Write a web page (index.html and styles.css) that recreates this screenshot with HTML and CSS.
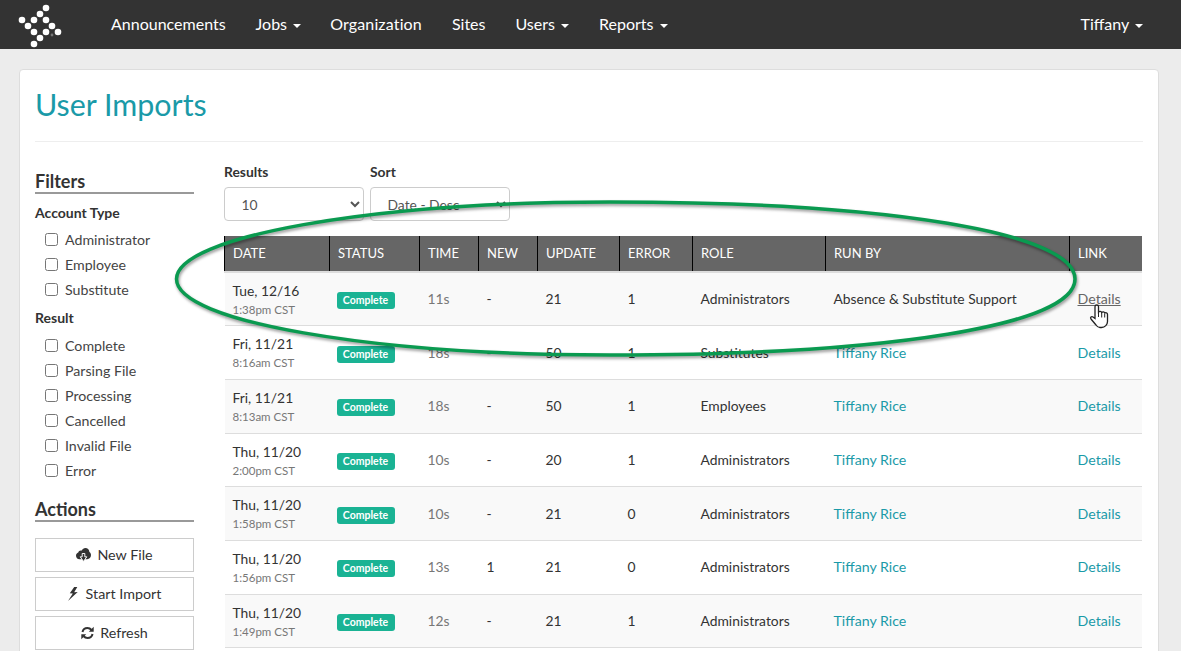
FILE: index.html
```html
<!DOCTYPE html>
<html lang="en">
<head>
<meta charset="utf-8">
<title>User Imports</title>
<link rel="stylesheet" href="styles.css">
</head>
<body>
<nav class="navbar">
  <svg class="logo" width="70" height="49" viewBox="0 0 70 49" aria-hidden="true">
    <g fill="#fff">
      <circle cx="46" cy="8" r="3.3"/><circle cx="40" cy="14" r="3.3"/><circle cx="34" cy="20" r="3.3"/>
      <circle cx="22" cy="20" r="3.3"/><circle cx="28" cy="26" r="3.3"/><circle cx="46" cy="20" r="3.3"/>
      <circle cx="52" cy="26" r="3.3"/><circle cx="34" cy="32" r="3.3"/><circle cx="46" cy="32" r="3.3"/>
      <circle cx="58" cy="32" r="3.3"/><circle cx="40" cy="38" r="3.3"/><circle cx="34" cy="44" r="3.3"/>
    </g>
    <circle cx="52" cy="35" r="1.4" fill="#777"/>
  </svg>
  <ul class="nav-list">
    <li><a href="#">Announcements</a></li>
    <li class="nav-tight"><a href="#">Jobs <span class="caret"></span></a></li>
    <li class="nav-wide"><a href="#">Organization</a></li>
    <li><a href="#">Sites</a></li>
    <li><a href="#">Users <span class="caret"></span></a></li>
    <li><a href="#">Reports <span class="caret"></span></a></li>
  </ul>
  <a class="nav-user" href="#">Tiffany <span class="caret"></span></a>
</nav>

<main class="card">
  <h1 class="title">User Imports</h1>
  <div class="columns">
    <aside class="sidebar">
      <h3 class="side-heading">Filters</h3>
      <h4 class="group-heading">Account Type</h4>
      <label class="check"><input type="checkbox">Administrator</label>
      <label class="check"><input type="checkbox">Employee</label>
      <label class="check"><input type="checkbox">Substitute</label>
      <h4 class="group-heading group-result">Result</h4>
      <label class="check"><input type="checkbox">Complete</label>
      <label class="check"><input type="checkbox">Parsing File</label>
      <label class="check"><input type="checkbox">Processing</label>
      <label class="check"><input type="checkbox">Cancelled</label>
      <label class="check"><input type="checkbox">Invalid File</label>
      <label class="check"><input type="checkbox">Error</label>
      <h3 class="side-heading actions-heading">Actions</h3>
      <div class="actions">
        <button class="btn"><svg width="15" height="14" viewBox="0 0 16 14" preserveAspectRatio="none" aria-hidden="true"><path fill="#333" d="M3.6 11.2C1.6 11.2 0 9.7 0 7.8c0-1.5 1-2.8 2.4-3.2C2.7 3.3 3.8 2.4 5 2.4c.4 0 .8.1 1.1.2C6.900 1 8.400 0 10 0c2.300 0 4.100 1.700 4.300 3.900 1 .6 1.700 1.800 1.700 3.100 0 2.300-1.800 4.200-4 4.200z"/><path fill="#333" stroke="#fff" stroke-width="1" d="M6.600 5.500h2.800v3.300h2.100L8 13.500 4.500 8.800h2.100z"/></svg> New File</button>
        <button class="btn"><svg width="12" height="14" viewBox="0 0 12 14" aria-hidden="true"><path fill="#333" d="M6.200 0 1.800 6.300l3 .1L0 14l9.700-9-3.500.2L9.300 0z"/></svg> Start Import</button>
        <button class="btn"><svg width="13" height="14" viewBox="0 0 13 14" aria-hidden="true"><g fill="none" stroke="#333" stroke-width="2"><path d="M1.500 6C2 3.500 4 2 6.500 2c1.700 0 3 .8 4 2"/><path d="M11.500 8c-.5 2.500-2.500 4-5 4-1.700 0-3-.8-4-2"/></g><path fill="#333" d="M12.700.8v5H7.800zM.3 13.200v-5h4.900z"/></svg> Refresh</button>
      </div>
    </aside>
    <section class="results">
      <div class="controls">
        <div class="control">
          <label class="control-label" for="results">Results</label>
          <select id="results" class="select"><option>10</option></select>
        </div>
        <div class="control">
          <label class="control-label" for="sort">Sort</label>
          <select id="sort" class="select"><option>Date - Desc</option></select>
        </div>
      </div>
      <table class="table">
        <colgroup>
          <col class="c-date"><col class="c-status"><col class="c-time"><col class="c-new"><col class="c-update"><col class="c-error"><col class="c-role"><col class="c-run"><col class="c-link">
        </colgroup>
        <thead>
          <tr><th>DATE</th><th>STATUS</th><th>TIME</th><th>NEW</th><th>UPDATE</th><th>ERROR</th><th>ROLE</th><th>RUN BY</th><th>LINK</th></tr>
        </thead>
        <tbody>
          <tr><td>Tue, 12/16<small>1:38pm CST</small></td><td><span class="badge">Complete</span></td><td class="muted">11s</td><td>-</td><td>21</td><td>1</td><td>Administrators</td><td>Absence &amp; Substitute Support</td><td><a class="hovered" href="#">Details</a></td></tr>
          <tr><td>Fri, 11/21<small>8:16am CST</small></td><td><span class="badge">Complete</span></td><td class="muted">18s</td><td>-</td><td>50</td><td>1</td><td>Substitutes</td><td><a href="#">Tiffany Rice</a></td><td><a href="#">Details</a></td></tr>
          <tr><td>Fri, 11/21<small>8:13am CST</small></td><td><span class="badge">Complete</span></td><td class="muted">18s</td><td>-</td><td>50</td><td>1</td><td>Employees</td><td><a href="#">Tiffany Rice</a></td><td><a href="#">Details</a></td></tr>
          <tr><td>Thu, 11/20<small>2:00pm CST</small></td><td><span class="badge">Complete</span></td><td class="muted">10s</td><td>-</td><td>20</td><td>1</td><td>Administrators</td><td><a href="#">Tiffany Rice</a></td><td><a href="#">Details</a></td></tr>
          <tr><td>Thu, 11/20<small>1:58pm CST</small></td><td><span class="badge">Complete</span></td><td class="muted">10s</td><td>-</td><td>21</td><td>0</td><td>Administrators</td><td><a href="#">Tiffany Rice</a></td><td><a href="#">Details</a></td></tr>
          <tr><td>Thu, 11/20<small>1:56pm CST</small></td><td><span class="badge">Complete</span></td><td class="muted">13s</td><td>1</td><td>21</td><td>0</td><td>Administrators</td><td><a href="#">Tiffany Rice</a></td><td><a href="#">Details</a></td></tr>
          <tr><td>Thu, 11/20<small>1:49pm CST</small></td><td><span class="badge">Complete</span></td><td class="muted">12s</td><td>-</td><td>21</td><td>1</td><td>Administrators</td><td><a href="#">Tiffany Rice</a></td><td><a href="#">Details</a></td></tr>
        </tbody>
      </table>
    </section>
  </div>
</main>

<svg class="annotation" width="1181" height="651" viewBox="0 0 1181 651" aria-hidden="true">
  <path class="ring" d="M176.500 279C176.500 236.600 371 202 610 202C890 202 1075 233 1075 279C1075 325 890 355 610 355C371 355 176.500 321.400 176.500 279Z"/>
  <path class="pointer" d="M1095 306.500c0-2 3.500-2 3.500 0v5.500c.8-1 2.800-1 3.200.5.8-.8 2.600-.8 3 .5.8-.5 2.800-.3 2.800 1.500v7c0 3-2.500 6-6 6h-1.500c-2 0-3-1-4-2.500l-5-6c-1.200-1.500.5-3 2-2l2 1.500z"/>
  <path class="pointer-lines" d="M1098.500 312v5M1101.700 313v4.500M1104.700 314v3.500"/>
</svg>
</body>
</html>
```
FILE: styles.css
```css
* { box-sizing: border-box; }
html, body { height: 651px; overflow: hidden; }
body {
  margin: 0;
  background: #ececec;
  color: #333;
  font: 13.850px/20px Lato, "Open Sans", sans-serif;
}
a { text-decoration: none; color: #1a9aa8; }

.navbar {
  display: flex;
  align-items: center;
  height: 49px;
  background: #333;
}
.logo { flex: none; margin-right: 26px; }
.nav-list { display: flex; list-style: none; margin: 0; padding: 0; flex: 1; }
.nav-list a { display: block; padding: 0 15px; color: #fff; font-size: 16px; line-height: 47px; height: 49px; }
.nav-tight { margin-right: -1px; }
.nav-wide a { letter-spacing: .15px; }
.nav-user { color: #fff; font-size: 16px; margin-right: 38px; line-height: 47px; height: 49px; }
.caret {
  display: inline-block;
  margin-left: 2px;
  vertical-align: middle;
  border-top: 4px solid #fff;
  border-left: 4px solid transparent;
  border-right: 4px solid transparent;
}

.card {
  width: 1140px;
  height: 700px;
  margin: 20px 0 0 19px;
  padding: 0 15px;
  background: #fff;
  border: 1px solid #ddd;
  border-radius: 4px;
}
.title {
  margin: 0;
  height: 72px;
  padding-top: 15px;
  border-bottom: 1px solid #eee;
  color: #1a9aa8;
  font-size: 30.400px;
  font-weight: 400;
  line-height: 38px;
}
.columns { display: flex; gap: 30px; }

.sidebar { width: 159px; flex: none; padding-top: 29px; }
.side-heading {
  margin: 0;
  height: 23px;
  border-bottom: 2px solid #999;
  font-size: 18px;
  font-weight: 700;
  line-height: 21px;
}
.group-heading { margin: 9px 0 4px; font-size: 14px; font-weight: 700; line-height: 20px; }
.group-result { margin-top: 6px; margin-bottom: 5px; }
.check { display: flex; align-items: center; height: 25px; padding-left: 10px; color: #444; font-size: 14.200px; }
.check input { width: 13px; height: 13px; margin: 0 7px 0 0; }
.actions-heading { margin-top: 16px; }
.actions { display: flex; flex-direction: column; gap: 5px; margin-top: 16px; }
.btn {
  display: flex;
  align-items: center;
  justify-content: center;
  gap: 6px;
  height: 34px;
  padding: 0;
  background: #fff;
  border: 1px solid #ccc;
  color: #333;
  font: inherit;
  font-size: 14.300px;
}

.results { width: 918px; flex: none; padding-top: 20px; }
.controls { display: flex; gap: 6px; }
.control-label { display: block; margin-bottom: 5px; font-weight: 700; }
.control { width: 140px; }
.select {
  display: block;
  width: 140px;
  height: 34px;
  padding: 0 8px 0 12.500px;
  background: #fff;
  border: 1px solid #ccc;
  border-radius: 4px;
  color: #555;
  font: inherit;
}

.table {
  width: 917px;
  margin-top: 15px;
  table-layout: fixed;
  border-collapse: collapse;
}
.c-date { width: 105px; }
.c-status { width: 90px; }
.c-time { width: 59px; }
.c-new { width: 59px; }
.c-update { width: 82px; }
.c-error { width: 73px; }
.c-role { width: 133px; }
.c-run { width: 244px; }
.c-link { width: 72px; }
.table th {
  height: 36.340px;
  padding: 0 8px 2px;
  background: #666;
  border-left: 1px solid #000;
  border-bottom: 2px solid #ddd;
  color: #fff;
  font-size: 13px;
  font-weight: 400;
  text-align: left;
}
.table td {
  height: 53.67px;
  padding: 0 8px;
  border-bottom: 1px solid #ddd;
  color: #333;
  vertical-align: middle;
}
.table td a { font-size: 14.200px; }
.table tbody tr:nth-child(odd) td { background: #f9f9f9; }
.table small { display: block; margin-top: 1px; color: #777; font-size: 11.500px; line-height: 16px; }
.table td.muted { color: #777; }
.badge {
  display: inline-block;
  width: 58px;
  margin-left: -1px;
  background: #1ab394;
  border-radius: 3px;
  color: #fff;
  font-size: 10.500px;
  font-weight: 700;
  line-height: 17px;
  text-align: center;
}
.table a.hovered { color: #666; text-decoration: underline; }

.annotation { position: absolute; top: 0; left: 0; pointer-events: none; }
.ring {
  fill: none;
  stroke: #0a9a50;
  stroke-width: 3.500;
  filter: drop-shadow(1px 2px 1.500px rgba(0, 0, 0, .4));
}
.pointer { fill: #fff; stroke: #222; stroke-width: 1.300; }
.pointer-lines { fill: none; stroke: #222; stroke-width: 1; }
```
